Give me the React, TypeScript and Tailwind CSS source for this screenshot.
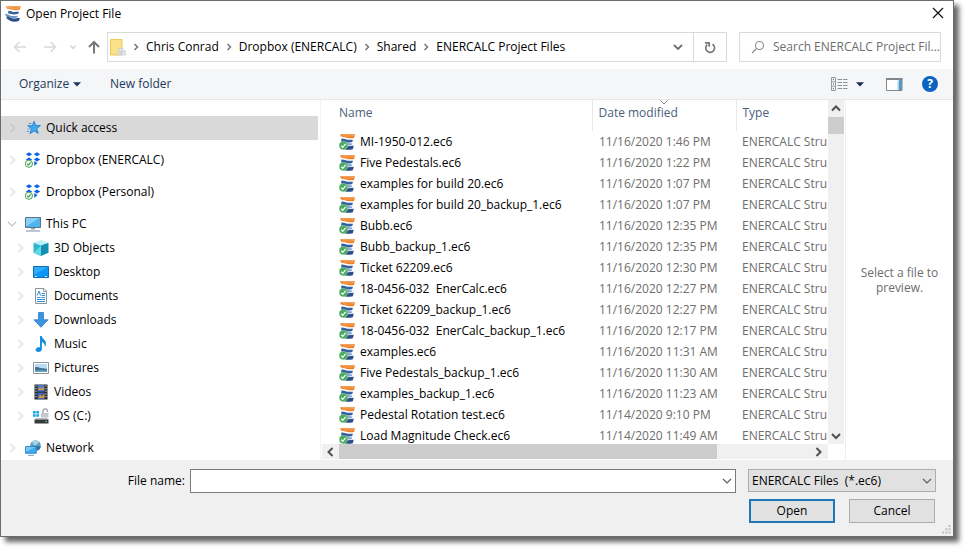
import type { ReactNode } from "react";

const files: [string, string][] = [
  ["MI-1950-012.ec6", "11/16/2020 1:46 PM"],
  ["Five Pedestals.ec6", "11/16/2020 1:22 PM"],
  ["examples for build 20.ec6", "11/16/2020 1:07 PM"],
  ["examples for build 20_backup_1.ec6", "11/16/2020 1:07 PM"],
  ["Bubb.ec6", "11/16/2020 12:35 PM"],
  ["Bubb_backup_1.ec6", "11/16/2020 12:35 PM"],
  ["Ticket 62209.ec6", "11/16/2020 12:30 PM"],
  ["18-0456-032  EnerCalc.ec6", "11/16/2020 12:27 PM"],
  ["Ticket 62209_backup_1.ec6", "11/16/2020 12:27 PM"],
  ["18-0456-032  EnerCalc_backup_1.ec6", "11/16/2020 12:17 PM"],
  ["examples.ec6", "11/16/2020 11:31 AM"],
  ["Five Pedestals_backup_1.ec6", "11/16/2020 11:30 AM"],
  ["examples_backup_1.ec6", "11/16/2020 11:23 AM"],
  ["Pedestal Rotation test.ec6", "11/14/2020 9:10 PM"],
  ["Load Magnitude Check.ec6", "11/14/2020 11:49 AM"],
];

function Icon({ children }: { children: ReactNode }) {
  return (
    <svg width="16" height="16" viewBox="0 0 16 16" fill="none" className="shrink-0" aria-hidden="true">
      {children}
    </svg>
  );
}

function Chevron({ dir, className, wide }: { dir: "up" | "down" | "left" | "right"; className: string; wide?: number }) {
  const d = {
    up: "M1 6.5 5 2.5 9 6.5",
    down: "M1 3 5 7 9 3",
    left: "M6.5 1 2.5 5 6.5 9",
    right: "M3.5 1 7.5 5 3.5 9",
  }[dir];
  return (
    <svg width="10" height="10" viewBox="0 0 10 10" fill="none" stroke="currentColor" strokeWidth={wide ?? 1.2} className={`shrink-0 ${className}`} aria-hidden="true">
      <path d={d} />
    </svg>
  );
}

const Logo = () => (
  <Icon>
    <path d="M1 .3h14.800L14.800 3.800c-2 .6-4.500.6-6.500.2C6 3.500 4 2.800 2 2.800z" fill="#ee8730" />
    <path d="M2 1.500c3-.3 5 .9 8 .8 2 0 3.500-.4 5-.8" stroke="#f9b767" strokeWidth=".8" />
    <path d="M3.500 4.800c2-.2 3 1 5 1.200 2 .1 3.500-.2 5.500-.2l-.8 2c-2 .6-4 .8-6 .5C5.500 8 4.500 7.400 3 7.300z" fill="#33619d" />
    <path d="M0 8.200c2-.4 3.500.4 5 1.200 2.500.9 5 .4 8 .3l-.8 1.800c-3 .8-6 .9-8 .1-1.200-.5-2.200-1-3.200-1z" fill="#6d9bc9" />
    <path d="M2 10.300c2 .2 3.500 2.200 6.500 2.200 2 0 3.800-.5 6.500-.5l-1.200 3c-2.300.9-5.300 1-7.600.3C4 14.500 3.300 13 1.500 12.800z" fill="#2a4e88" />
  </Icon>
);

const FileIcon = () => (
  <Icon>
    <path d="M1 .3h15l-1 3.600c-2.500.6-5 .5-7.500-.2L2 2.500z" fill="#ee7f2b" />
    <path d="M4 1.600c3 .8 7 .7 11-.2" stroke="#f9b767" strokeWidth=".7" />
    <path d="M2.500 4.600c2.500-.3 4 1.100 6.500 1.200l5-.1-.8 2.300c-2.200.6-4.700.8-7 .3L2 7.500z" fill="#33619d" />
    <path d="M6.500 8.800 13.500 9.600l-1 1.700-5.500.5z" fill="#7fa6d4" />
    <path d="M6 12.600 14.800 11.800l-1 3.400c-2.500.7-5.200.8-7.700.3z" fill="#2a4e88" />
    <circle cx="4.300" cy="11.600" r="4.100" fill="#46ab5a" stroke="#a8d8b0" strokeWidth=".5" />
    <path d="m2.300 11.700 1.500 1.600 2.800-3.400" stroke="#fff" strokeWidth="1.300" />
  </Icon>
);

const Star = () => (
  <Icon>
    <path d="m9 1.300 1.700 4.200 4.700.1-3.600 3 1.400 4.800L9.200 11l-4.300 2.700 1.500-4.800L3 5.800l4.300-.1z" fill="#3fa9f0" stroke="#1976c5" strokeWidth=".8" />
    <path d="M3.500 3.500h3M2 6h2M2.500 9h2.500M1.500 11.500h2.500" stroke="#4a9bdc" strokeWidth=".9" />
  </Icon>
);

const Dropbox = () => (
  <Icon>
    <path d="m4 .2 3.200 2L4 4.200.8 2.200zm8 0 3.200 2-3.200 2-3.200-2zM4 5.500l3.200 2-3.200 2-3.200-2zm8 0 3.200 2-3.200 2-3.200-2zM9.300 9l3.200 2-3.200 3z" fill="#0f62e6" />
    <path d="m8 2.800 3.200 2L8 6.800l-3.200-2z" fill="#fff" />
    <circle cx="3.900" cy="11.700" r="3.600" fill="#fff" stroke="#3e9d4e" strokeWidth="1" />
    <path d="m2.100 11.700 1.400 1.500 2.300-2.900" stroke="#3e9d4e" strokeWidth="1.200" />
  </Icon>
);

const ThisPC = () => (
  <Icon>
    <path d="M.5 1.500h15v10H.5z" fill="#4fb4ef" stroke="#5f7285" />
    <path d="M1 2h13.500L1 10.500z" fill="#86d0fa" />
    <path d="M6 12h4v1.500H6z" fill="#93a1b0" />
    <path d="M1 15h14" stroke="#9aa6c0" strokeWidth="1.300" />
  </Icon>
);

const Cube = () => (
  <Icon>
    <path d="m8 0 7.500 2.800L8 5.500.5 2.800z" fill="#bdf0f6" />
    <path d="M.5 2.800 8 5.500V16L.5 12.800z" fill="#2fb6cd" />
    <path d="M15.500 2.800 8 5.500V16l7.500-3.200z" fill="#1390b0" />
    <path d="M.5 12.800 8 5.500V16z" fill="#63d5e4" />
  </Icon>
);

const DesktopIcon = () => (
  <Icon>
    <path d="M.5 2.500h15v11H.5z" fill="#0b96f3" stroke="#1769ad" />
    <path d="M1 3h14L1 11z" fill="#30adfa" />
    <path d="M2 12.500h2m8 0h2" stroke="#c8e9ff" />
  </Icon>
);

const Doc = () => (
  <Icon>
    <path d="M2.500.5H11L13.500 3v12.500h-11z" fill="#fbfcfd" stroke="#8b9499" />
    <path d="M10.500.5V3.500h3" stroke="#8b9499" strokeWidth=".8" />
    <path d="M4 7.500 6 3l1.500 4.500M8.500 5.500H12M8.500 7.500H12M4 9.500h3.500m1 0H12M4 11.500h8M4 13.500h8" stroke="#2e95cc" />
  </Icon>
);

const Download = () => (
  <Icon>
    <path d="M5.500.5h5v7.300h4.600L8 15.300.9 7.800h4.600z" fill="#3f93e0" stroke="#2a7cc9" strokeWidth=".8" />
  </Icon>
);

const Music = () => (
  <Icon>
    <path d="M7 0h1.700c.4 3 4.800 4 4.300 8.200-.2 1.400-.9 2.200-1.400 2.700.7-3-1-4.200-2.700-5V13c0 1.800-1.700 3-3.600 3-1.600 0-2.700-.9-2.700-2.200 0-1.700 2-3 4.400-2.500z" fill="#1190e3" />
  </Icon>
);

const Picture = () => (
  <Icon>
    <path d="M.5 2.500h15v11H.5z" fill="#fff" stroke="#8d9499" />
    <path d="M2 4h12v8H2z" fill="#b5dcf3" />
    <path d="M2 7.500c3-1.500 5 1 7 .8 2 0 3.500.7 5 .7v3H2z" fill="#3f718c" />
    <path d="M2 10.500c4 0 8-.5 12 .3V12H2z" fill="#6aa5c4" />
  </Icon>
);

const Video = () => (
  <Icon>
    <path d="M1.500.5h13v15h-13z" fill="#24262b" />
    <path d="M4.500 1h7v6.500h-7z" fill="#4d79c9" />
    <path d="M4.500 8.500h7V15h-7z" fill="#3d62b6" />
    <path d="m5 6 2-3 1.500 2L10 2.500 11.500 6zM5 14l2-3.500 2 2 2.500-3V14z" fill="#d9953c" />
    <path d="M3 1.500v13M13 1.500v13" stroke="#e9edf2" strokeDasharray="1.200 1.400" />
  </Icon>
);

const Drive = () => (
  <Icon>
    <path d="M0 3h2.700v2.500H0zm3.300 0H6v2.500H3.300zM0 6.200h2.700v2.500H0zm3.300 0H6v2.500H3.300z" fill="#11a9e8" />
    <path d="M10 5V3.500C10 .2 14.500.2 14.500 3v1" stroke="#9ba1a5" strokeWidth="1.300" />
    <path d="M8 5h7.500v4.500H8z" fill="#c2c7ca" />
    <path d="M3 10h11l1.500 1.500H1.500z" fill="#b7bcc0" />
    <path d="M1.500 11.500h14v4h-14z" fill="#34393d" />
    <path d="M12.500 13.500h1.500" stroke="#5fe06a" />
  </Icon>
);

const NetworkIcon = () => (
  <Icon>
    <circle cx="10.500" cy="5.500" r="5.300" fill="#5a9fc4" />
    <path d="M7 2c2-2 5-1.800 7-.2C12.500 4 12 5.500 9 5z" fill="#a8d4e2" />
    <path d="M11 6.500c2-.5 3.500-.5 4.700 0-.3 2-1.500 3.500-3 4.200z" fill="#2d6f96" />
    <path d="M.5 6.500h10.800v6.800H.5z" fill="#3caaf0" stroke="#2b78ad" strokeWidth=".8" />
    <path d="M1 7h9.500L1 12z" fill="#74c8fa" />
    <path d="M3 15.300h6" stroke="#6ba4c9" />
  </Icon>
);

type Node = { label: string; icon: ReactNode; child?: boolean; gap?: boolean; open?: boolean; selected?: boolean };

const nodes: Node[] = [
  { label: "Quick access", icon: <Star />, selected: true },
  { label: "Dropbox (ENERCALC)", icon: <Dropbox />, gap: true },
  { label: "Dropbox (Personal)", icon: <Dropbox />, gap: true },
  { label: "This PC", icon: <ThisPC />, gap: true, open: true },
  { label: "3D Objects", icon: <Cube />, child: true },
  { label: "Desktop", icon: <DesktopIcon />, child: true },
  { label: "Documents", icon: <Doc />, child: true },
  { label: "Downloads", icon: <Download />, child: true },
  { label: "Music", icon: <Music />, child: true },
  { label: "Pictures", icon: <Picture />, child: true },
  { label: "Videos", icon: <Video />, child: true },
  { label: "OS (C:)", icon: <Drive />, child: true },
  { label: "Network", icon: <NetworkIcon />, gap: true },
];

function TitleBar() {
  return (
    <header className="flex h-[31px] items-start justify-between pl-1 pr-[5px]">
      <div className="flex items-center gap-[5px] pt-1">
        <Logo />
        <h1 className="leading-[18px]">Open Project File</h1>
      </div>
      <button aria-label="Close" className="p-1 pt-[6px]">
        <svg width="12" height="12" viewBox="0 0 12 12" stroke="#111" strokeWidth="1.200" aria-hidden="true">
          <path d="m1 1 10 10M11 1 1 11" />
        </svg>
      </button>
    </header>
  );
}

function AddressRow() {
  return (
    <div className="flex items-center pl-3 pr-3">
      <nav aria-label="History" className="flex w-[94px] items-center">
        <button aria-label="Back" className="w-[30px]">
          <svg width="14" height="12" viewBox="0 0 14 12" fill="none" stroke="#d9d9d9" strokeWidth="1.600" aria-hidden="true">
            <path d="M13 6H2M6.500 1 1.500 6l5 5" />
          </svg>
        </button>
        <button aria-label="Forward" className="w-[26px]">
          <svg width="14" height="12" viewBox="0 0 14 12" fill="none" stroke="#d9d9d9" strokeWidth="1.600" aria-hidden="true">
            <path d="M1 6h11M7.500 1l5 5-5 5" />
          </svg>
        </button>
        <button aria-label="Recent locations" className="w-[18px]">
          <svg width="8" height="8" viewBox="0 0 8 8" fill="none" stroke="#d4d4d4" strokeWidth="1.400" aria-hidden="true">
            <path d="m1.500 2.500 2.500 3 2.500-3" />
          </svg>
        </button>
        <button aria-label="Up" className="w-4">
          <svg width="14" height="14" viewBox="0 0 14 14" fill="none" stroke="#777" strokeWidth="2" aria-hidden="true">
            <path d="M7 13.500V2M2 7l5-5 5 5" />
          </svg>
        </button>
      </nav>
      <div className="flex h-[30px] min-w-0 flex-1 items-center border border-[#d9d9d9] pl-[2px]">
        <svg width="16" height="17" viewBox="0 0 16 17" className="shrink-0" aria-hidden="true">
          <path d="M.5.500H12v15.500H.5z" fill="#fbe08a" stroke="#ebc75c" />
          <path d="M9 9.500h4v3.500H9zM11.500 12H16v4h-4.500zM8 13h3v3H8z" fill="#e2e5e8" stroke="#c3c9ce" strokeWidth=".6" />
        </svg>
        <ol className="flex min-w-0 flex-1 items-center">
          {["Chris Conrad", "Dropbox (ENERCALC)", "Shared", "ENERCALC Project Files"].map((c) => (
            <li key={c} className="flex items-center whitespace-nowrap">
              <svg width="6" height="8" viewBox="0 0 6 8" fill="none" stroke="#777" strokeWidth="1.500" className="mx-[7px]" aria-hidden="true">
                <path d="m1.500 1 3 3-3 3" />
              </svg>
              <button>{c}</button>
            </li>
          ))}
        </ol>
        <button aria-label="Previous locations" className="px-[10px]">
          <Chevron dir="down" className="text-[#6e6e6e]" wide={1.8} />
        </button>
        <button aria-label="Refresh" className="grid h-full w-[33px] place-items-center border-l border-[#d9d9d9]">
          <svg width="12" height="13" viewBox="0 0 12 13" fill="none" stroke="#777" strokeWidth="1.700" aria-hidden="true">
            <path d="M8.500 3.200A4.400 4.400 0 1 1 3.200 3.700M1 1.800h4.200v4" />
          </svg>
        </button>
      </div>
      <label className="ml-3 flex h-[30px] w-[202px] items-center border border-[#d9d9d9] pl-[11px]">
        <svg width="14" height="14" viewBox="0 0 14 14" fill="none" stroke="#8a8a8a" strokeWidth="1.100" className="shrink-0" aria-hidden="true">
          <circle cx="8.500" cy="5.500" r="4" />
          <path d="M5.500 8.500 1 13" />
        </svg>
        <input aria-label="Search" placeholder="Search ENERCALC Project Fil..." className="ml-2 min-w-0 flex-1 bg-transparent outline-none placeholder:text-[#6d6d6d]" />
      </label>
    </div>
  );
}

function Toolbar() {
  return (
    <div className="mt-[7px] flex h-[31px] items-center border-b border-[#e3e8ea] bg-[#f4f6f8] pl-[18px] pr-[15px] text-[#1e395b]">
      <button className="flex w-[91px] items-center gap-1">
        Organize
        <svg width="8" height="5" viewBox="0 0 8 5" aria-hidden="true">
          <path d="M0 .3h8l-4 4.200z" fill="#1e395b" />
        </svg>
      </button>
      <button>New folder</button>
      <button aria-label="Change your view" className="ml-auto flex items-center gap-2">
        <svg width="17" height="14" viewBox="0 0 17 14" fill="none" aria-hidden="true">
          <path d="M.5.500h4v13h-4zM.5 4.800h4m-4 4.400h4" stroke="#999" />
          <path d="M2 2.600h1M2 7h1M2 11.400h1" stroke="#555" />
          <path d="M6.500 2.500H11m1 0h4.500M6.500 5.500H11m1 0h4.500M6.500 8.500H11m1 0h4.500M6.500 11.500H11m1 0h4.500" stroke="#8e9296" />
        </svg>
        <svg width="8" height="5" viewBox="0 0 8 5" aria-hidden="true">
          <path d="M0 .3h8l-4 4.200z" fill="#1b2a5b" />
        </svg>
      </button>
      <button aria-label="Show the preview pane" className="ml-[22px]">
        <svg width="17" height="13" viewBox="0 0 17 13" aria-hidden="true">
          <path d="M.5.500h15.500v12H.5z" fill="#fff" stroke="#808890" />
          <path d="M0 0h16.500v2H0z" fill="#80868c" />
          <path d="M11.500 2.500H13V12h-1.500z" fill="#a9d3e9" />
          <path d="M13 1.500h3V12h-3z" fill="#5797c0" />
        </svg>
      </button>
      <button aria-label="Get help" className="ml-[19px] grid size-4 place-items-center rounded-full bg-[#0a63c2] leading-4 font-bold text-white">
        ?
      </button>
    </div>
  );
}

function Sidebar() {
  return (
    <nav aria-label="Folders" className="w-[320px] shrink-0 border-r border-[#f3f3f3] pt-4 pr-[2px]">
      <ul>
        {nodes.map((n) => (
          <li key={n.label} className={n.gap ? "mt-2" : ""}>
            <button className={`flex h-6 w-full items-center text-left ${n.child ? "pl-[14px]" : "pl-[6px]"} ${n.selected ? "bg-[#d9d9d9]" : ""}`}>
              <Chevron dir={n.open ? "down" : "right"} className={n.open || n.selected ? "text-[#c3c3c3]" : "text-[#dedede]"} />
              <span className="ml-2 mr-[5px]">{n.icon}</span>
              {n.label}
            </button>
          </li>
        ))}
      </ul>
    </nav>
  );
}

function FileList() {
  return (
    <section aria-label="Files" className="flex min-w-0 flex-1">
      <div className="flex min-w-0 flex-1 flex-col pl-[1px]">
        <div className="h-86 overflow-hidden">
          <table className="w-full table-fixed text-left">
            <colgroup>
              <col />
              <col className="w-36" />
              <col className="w-[92px]" />
            </colgroup>
            <thead>
              <tr className="h-[31px] align-top text-[#4c607a]">
                <th className="pt-1 pl-[17px] leading-[18px] font-normal">Name</th>
                <th className="relative border-l border-[#e8e8e8] pt-1 pl-[6px] leading-[18px] font-normal">
                  Date modified
                  <svg width="8" height="5" viewBox="0 0 8 5" fill="none" stroke="#888" className="absolute top-0 left-1/2 -translate-x-1/2" aria-hidden="true">
                    <path d="m.5.500 3.500 3.500L7.500.500" />
                  </svg>
                </th>
                <th className="border-l border-[#e8e8e8] pt-1 pl-[6px] leading-[18px] font-normal">Type</th>
              </tr>
            </thead>
            <tbody>
              {files.map(([name, date]) => (
                <tr key={name} className="h-[21px] text-[#6d6d6d]">
                  <td className="pl-[17px] text-black">
                    <span className="flex items-center gap-[5px] whitespace-pre">
                      <FileIcon />
                      {name}
                    </span>
                  </td>
                  <td className="pl-[7px] whitespace-nowrap">{date}</td>
                  <td className="pl-[6px] whitespace-nowrap">ENERCALC Stru</td>
                </tr>
              ))}
            </tbody>
          </table>
        </div>
        <div className="flex h-[15px] items-center bg-[#f0f0f0]">
          <button aria-label="Scroll left" className="grid w-[17px] shrink-0 place-items-center">
            <Chevron dir="left" className="text-[#505050]" wide={2} />
          </button>
          <div className="h-full flex-1">
            <div className="h-full w-4/5 bg-[#cdcdcd]" />
          </div>
          <button aria-label="Scroll right" className="flex w-[17px] shrink-0 pl-[2px]">
            <Chevron dir="right" className="text-[#505050]" wide={2} />
          </button>
        </div>
      </div>
      <div className="mb-4 flex w-4 flex-col items-center bg-[#f0f0f0]">
        <button aria-label="Scroll up" className="grid h-[17px] place-items-center">
          <Chevron dir="up" className="text-[#505050]" wide={2} />
        </button>
        <div className="h-[17px] w-full bg-[#cdcdcd]" />
        <button aria-label="Scroll down" className="mt-auto grid h-[17px] place-items-center">
          <Chevron dir="down" className="text-[#505050]" wide={2} />
        </button>
      </div>
    </section>
  );
}

function Footer() {
  return (
    <footer className="relative bg-[#f0f0f0] pt-[9px] pr-[17px] pb-[13px] pl-[119px]">
      <div className="flex items-start">
        <label htmlFor="file-name" className="w-[70px] shrink-0 pr-[5px] text-right leading-6 whitespace-nowrap">
          File name:
        </label>
        <div className="flex h-6 min-w-0 flex-1 items-center border border-[#7a7a7a] bg-white pr-[3px]">
          <input id="file-name" className="h-full min-w-0 flex-1 px-1 outline-none" />
          <Chevron dir="down" className="text-[#606060]" />
        </div>
        <div className="relative ml-3 w-[188px] shrink-0">
          <select aria-label="File type" className="h-[23px] w-full appearance-none border border-[#adadad] bg-[#e1e1e1] pl-[3px]">
            <option>{"ENERCALC Files\u00a0 (*.ec6)"}</option>
          </select>
          <Chevron dir="down" className="pointer-events-none absolute top-[7px] right-1 text-[#606060]" />
        </div>
      </div>
      <div className="mt-[6px] flex justify-end gap-[14px] pr-[1px]">
        <button className="h-6 w-[86px] border-2 border-[#1f76b8] bg-[#e1e1e1]">Open</button>
        <button className="h-6 w-[86px] border border-[#adadad] bg-[#e1e1e1]">Cancel</button>
      </div>
      <svg width="9" height="9" viewBox="0 0 9 9" fill="#bfbfbf" className="absolute right-[2px] bottom-[2px]" aria-hidden="true">
        <path d="M6.500 0h2v2h-2zM3.300 3.300h2v2h-2zm3.200 0h2v2h-2zM0 6.500h2v2H0zm3.300 0h2v2h-2zm3.200 0h2v2h-2z" />
      </svg>
    </footer>
  );
}

export default function App() {
  return (
    <div className="bg-white pr-[15px] pb-[15px] font-['Open_Sans','Noto_Sans',sans-serif] text-[12px] leading-4 text-black">
      <main className="border border-[#6b6b6b] bg-white shadow-[5px_5px_5px_rgba(0,0,0,0.6)]">
        <TitleBar />
        <AddressRow />
        <Toolbar />
        <div className="flex">
          <Sidebar />
          <FileList />
          <aside className="ml-[1px] flex w-[108px] shrink-0 items-center justify-center border-l border-[#f0f0f0] text-center leading-[15px] text-[#6d6d6d]">
            <p className="w-20">Select a file to preview.</p>
          </aside>
        </div>
        <Footer />
      </main>
    </div>
  );
}
